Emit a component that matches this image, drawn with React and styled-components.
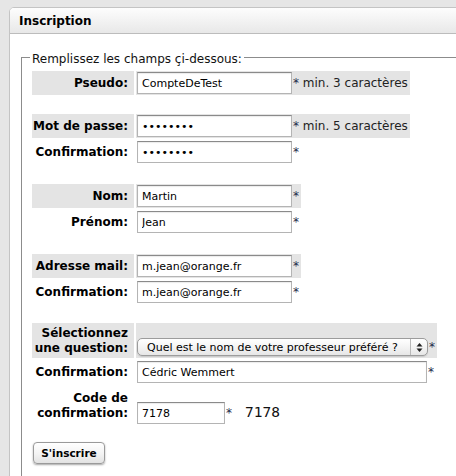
import React from 'react';
import styled, { createGlobalStyle } from 'styled-components';

const GlobalStyle = createGlobalStyle`
    body {
        margin: 0;
        background: #e6e6e6;
        overflow: hidden;
        font-family: "DejaVu Sans", Verdana, sans-serif;
        font-size: 12px;
        color: #000;
    }
`;

const Panel = styled.div`
    margin: 7px 0 0 9px;
    width: 520px;
    min-height: 500px;
    background: #fff;
    border: 1px solid #c4c4c4;
    border-top-left-radius: 5px;
    overflow: hidden;
`;

const PanelHeader = styled.div`
    height: 25px;
    padding: 0 9px;
    display: flex;
    align-items: center;
    font-weight: bold;
    background: linear-gradient(#fdfdfd, #e8e8e8);
    border-bottom: 1px solid #bcbcbc;
`;

const PanelBody = styled.div`
    padding: 13px 0 0 11px;
`;

const Fieldset = styled.fieldset`
    margin: 0;
    min-width: 0;
    padding: 4px 0 40px 8px;
    border: 1px solid #8c8c8c;
    border-right: none;
`;

const Legend = styled.legend`
    padding: 5px 2px 0;
    line-height: 15px;
    color: #111;
`;

const Rows = styled.div`
    display: flex;
    flex-direction: column;
    gap: 2px;
    padding-left: 2px;
`;

const Row = styled.div`
    display: flex;
    gap: 2px;
`;

const Spacer = styled.div`
    height: ${({ $h }) => $h || 16}px;
`;

const Label = styled.div`
    width: 102px;
    box-sizing: border-box;
    padding: 0 6px 0 0;
    display: flex;
    align-items: center;
    justify-content: flex-end;
    text-align: right;
    font-weight: bold;
    line-height: 15px;
    min-height: ${({ $h }) => $h || 24}px;
    background: ${({ $hl }) => ($hl ? '#e4e4e4' : 'transparent')};
`;

const Value = styled.div`
    display: flex;
    flex-direction: column;
    justify-content: ${({ $bottom }) => ($bottom ? 'flex-end' : 'center')};
    padding: 1px 2px ${({ $bottom }) => ($bottom ? 2 : 1)}px 1px;
    background: ${({ $hl }) => ($hl ? '#e4e4e4' : 'transparent')};
`;

const Field = styled.div`
    display: flex;
    align-items: baseline;
`;

const TextInput = styled.input`
    width: ${({ $w }) => $w || 155}px;
    height: 22px;
    box-sizing: border-box;
    margin: 0;
    padding: 0 4px;
    border: 1px solid #b4b4b4;
    border-top-color: #8a8a8a;
    box-shadow: inset 0 1px 1px rgba(0, 0, 0, 0.08);
    font-family: "DejaVu Sans", Verdana, sans-serif;
    font-size: 11px;
    color: #000;
    background: #fff;
    outline: none;
`;

const Star = styled.span`
    color: #1b2b4a;
    padding-left: 1px;
`;

const Hint = styled.span`
    color: #222;
    white-space: pre;
`;

const SelectBox = styled.div`
    width: 291px;
    height: 18px;
    box-sizing: border-box;
    display: flex;
    border: 1px solid #9c9c9c;
    border-radius: 5px;
    background: linear-gradient(#ffffff, #f4f4f4 50%, #e6e6e6);
    box-shadow: 0 1px 1px rgba(0, 0, 0, 0.12);
    overflow: hidden;
`;

const SelectEl = styled.select`
    flex: 1;
    appearance: none;
    border: none;
    background: transparent;
    margin: 0;
    padding: 0 0 0 9px;
    font-family: "DejaVu Sans", Verdana, sans-serif;
    font-size: 11px;
    color: #000;
    outline: none;
`;

const Stepper = styled.div`
    width: 16px;
    border-left: 1px solid #b8b8b8;
    display: flex;
    align-items: center;
    justify-content: center;
`;

const Captcha = styled.span`
    margin-left: 13px;
    font-family: "DejaVu Sans Mono", "Liberation Mono", monospace;
    font-size: 14.5px;
    color: #111;
`;

const SubmitButton = styled.button`
    margin: 16px 0 0 3px;
    width: 72px;
    height: 22px;
    padding: 0;
    border: 1px solid #9a9a9a;
    border-radius: 4px;
    background: linear-gradient(#ffffff, #f3f3f3 55%, #e2e2e2);
    box-shadow: 0 1px 2px rgba(0, 0, 0, 0.35);
    font-family: "DejaVu Sans", Verdana, sans-serif;
    font-size: 10.5px;
    font-weight: bold;
    color: #000;
`;

const FieldRow = ({ label, hl, type = 'text', value, w, hint }) => (
    <Row>
        <Label $hl={hl}>{label}</Label>
        <Value $hl={hl}>
            <Field>
                <TextInput type={type} defaultValue={value} $w={w} />
                <Star>*</Star>
                {hint && <Hint> {hint}</Hint>}
            </Field>
        </Value>
    </Row>
);

const App = () => (
    <>
        <GlobalStyle />
        <Panel>
            <PanelHeader>Inscription</PanelHeader>
            <PanelBody>
                <Fieldset>
                    <Legend>Remplissez les champs çi-dessous:</Legend>
                    <Rows>
                        <FieldRow hl label="Pseudo:" value="CompteDeTest" hint="min. 3 caractères" />
                        <Spacer $h={15} />
                        <FieldRow hl label="Mot de passe:" type="password" value="12345678" hint="min. 5 caractères" />
                        <FieldRow label="Confirmation:" type="password" value="12345678" />
                        <Spacer />
                        <FieldRow hl label="Nom:" value="Martin" />
                        <FieldRow label="Prénom:" value="Jean" />
                        <Spacer />
                        <FieldRow hl label="Adresse mail:" value="m.jean@orange.fr" />
                        <FieldRow label="Confirmation:" value="m.jean@orange.fr" />
                        <Spacer $h={15} />
                        <Row>
                            <Label $hl $h={35}>Sélectionnez<br />une question:</Label>
                            <Value $hl $bottom>
                                <Field>
                                    <SelectBox>
                                        <SelectEl defaultValue="prof">
                                            <option value="prof">Quel est le nom de votre professeur préféré ?</option>
                                        </SelectEl>
                                        <Stepper>
                                            <svg width="7" height="11" viewBox="0 0 7 11">
                                                <path d="M3.5 1 L6.5 4.5 L0.5 4.5 Z" fill="#222" />
                                                <path d="M3.5 10 L6.5 6.5 L0.5 6.5 Z" fill="#222" />
                                            </svg>
                                        </Stepper>
                                    </SelectBox>
                                    <Star>*</Star>
                                </Field>
                            </Value>
                        </Row>
                        <FieldRow label="Confirmation:" value="Cédric Wemmert" w={290} />
                        <Row>
                            <Label $h={40}>Code de<br />confirmation:</Label>
                            <Value $bottom>
                                <Field>
                                    <TextInput defaultValue="7178" $w={88} />
                                    <Star>*</Star>
                                    <Captcha>7178</Captcha>
                                </Field>
                            </Value>
                        </Row>
                    </Rows>
                    <SubmitButton>S'inscrire</SubmitButton>
                </Fieldset>
            </PanelBody>
        </Panel>
    </>
);

export default App;
